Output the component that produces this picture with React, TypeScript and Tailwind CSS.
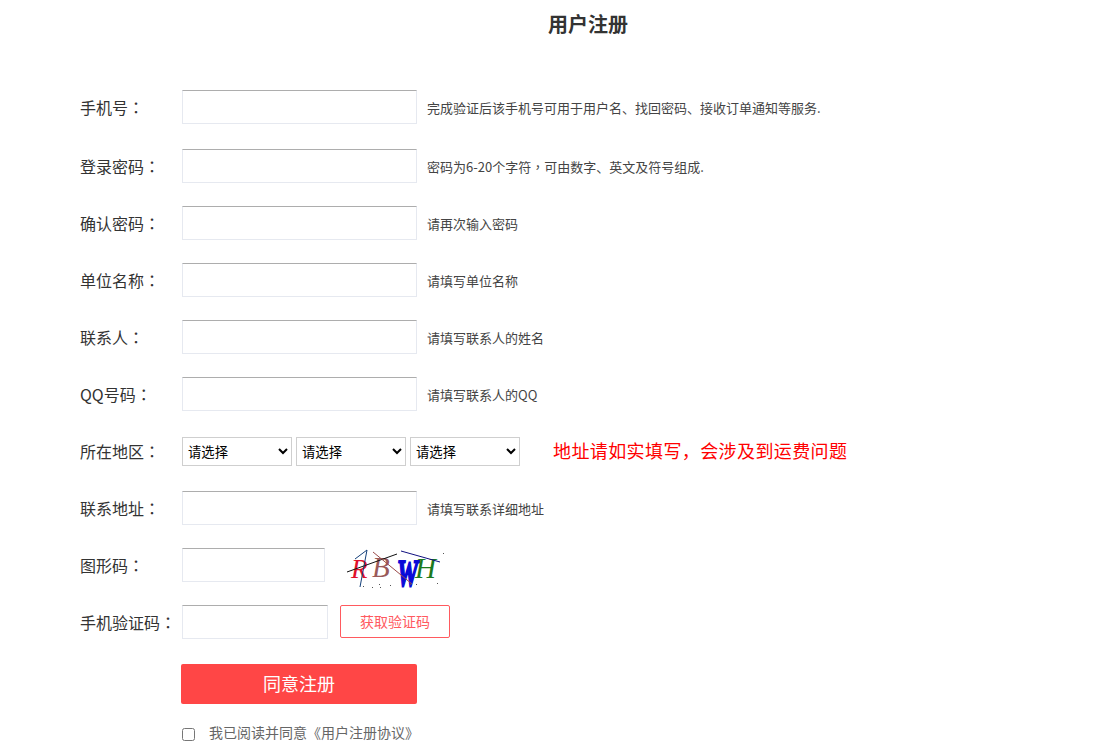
const CJK = "font-['Microsoft_YaHei','Noto_Sans_CJK_SC','Noto_Sans',sans-serif]";

const inputCls =
  "h-[34px] border border-[#e6e9f0] border-t-[#adadad] bg-white outline-none";

// the fullwidth colon and comma sit centred in the reference, as in the TC face
function Mark({ children }: { children: string }) {
  return <span className="font-['Noto_Sans_CJK_TC',sans-serif]">{children}</span>;
}

function Row({ label, className, children }: { label: string; className: string; children: React.ReactNode }) {
  return (
    <div className={`flex h-[34px] items-center ${className}`}>
      <label className="w-[102px] shrink-0 pb-[1px] text-[16px] text-[#333]">
        {label}
        <Mark>：</Mark>
      </label>
      {children}
    </div>
  );
}

function Hint({ children }: { children: React.ReactNode }) {
  return <span className="ml-[10px] pt-[1px] text-[13px] text-[#444]">{children}</span>;
}

function AreaSelect() {
  return (
    <select className="h-[29px] w-[110px] border border-[#cfcfcf] bg-white pl-[1px] text-[13.33px] text-black">
      <option>请选择</option>
    </select>
  );
}

function Captcha() {
  return (
    <svg width="100" height="48" viewBox="0 0 100 48" className="ml-[20px] mt-[14px]">
      <g fontFamily="'Liberation Serif', serif" fontStyle="italic">
        <text x="6" y="30" fill="#e0102a" fontSize="27">R</text>
        <text x="27" y="29" fill="#9a5a5a" fontSize="29">B</text>
        <text
          transform="translate(52,38) scale(0.62,1)"
          fill="#0a0ad8"
          stroke="#0a0ad8"
          strokeWidth="2"
          fontWeight="bold"
          fontSize="38"
        >
          W
        </text>
        <text x="70" y="30" fill="#1d7a1d" fontSize="29">H</text>
      </g>
      <path d="M2 24 L52 6" stroke="#111" strokeWidth="1" fill="none" />
      <path d="M56 3 L95 14" stroke="#101080" strokeWidth="1" fill="none" />
      <path d="M10 11 L22 2 L15 39" stroke="#14407a" strokeWidth="1" fill="none" />
      <path d="M28 4 L67 36" stroke="#9a4a4a" strokeWidth="1" fill="none" />
      <g fill="#555">
        <rect x="18" y="38" width="1" height="1" />
        <rect x="27" y="39" width="1" height="1" />
        <rect x="34" y="36" width="1" height="1" />
        <rect x="35" y="39" width="1" height="1" />
        <rect x="45" y="37" width="1" height="1" />
        <rect x="65" y="36" width="1" height="1" />
        <rect x="71" y="36" width="1" height="1" />
        <rect x="92" y="35" width="1" height="1" />
        <rect x="98" y="5" width="1" height="1" />
      </g>
    </svg>
  );
}

export default function App() {
  return (
    <div className={`h-[748px] w-[1118px] overflow-hidden bg-white ${CJK}`}>
      <h1 className="pl-[58px] pt-[10px] text-center text-[20px] leading-[28px] font-bold text-[#333]">用户注册</h1>
      <form className="pl-[80px] pt-[52px]">
        <Row label="手机号" className="">
          <input className={`${inputCls} w-[235px]`} />
          <Hint>完成验证后该手机号可用于用户名、找回密码、接收订单通知等服务.</Hint>
        </Row>
        <Row label="登录密码" className="mt-[25px]">
          <input className={`${inputCls} w-[235px]`} />
          <Hint>密码为6-20个字符<Mark>，</Mark>可由数字、英文及符号组成.</Hint>
        </Row>
        <Row label="确认密码" className="mt-[23px]">
          <input className={`${inputCls} w-[235px]`} />
          <Hint>请再次输入密码</Hint>
        </Row>
        <Row label="单位名称" className="mt-[23px]">
          <input className={`${inputCls} w-[235px]`} />
          <Hint>请填写单位名称</Hint>
        </Row>
        <Row label="联系人" className="mt-[23px]">
          <input className={`${inputCls} w-[235px]`} />
          <Hint>请填写联系人的姓名</Hint>
        </Row>
        <Row label="QQ号码" className="mt-[23px]">
          <input className={`${inputCls} w-[235px]`} />
          <Hint>请填写联系人的QQ</Hint>
        </Row>
        <Row label="所在地区" className="mt-[23px]">
          <div className="flex gap-[4px] pt-[1px]">
            <AreaSelect />
            <AreaSelect />
            <AreaSelect />
          </div>
          <span className="ml-[33px] pb-[1px] text-[18px] tracking-[0.4px] font-normal text-[#ff0000]">地址请如实填写，会涉及到运费问题</span>
        </Row>
        <Row label="联系地址" className="mt-[23px]">
          <input className={`${inputCls} w-[235px]`} />
          <Hint>请填写联系详细地址</Hint>
        </Row>
        <Row label="图形码" className="mt-[23px]">
          <input className={`${inputCls} w-[143px]`} />
          <Captcha />
        </Row>
        <Row label="手机验证码" className="mt-[23px]">
          <input className={`${inputCls} w-[146px]`} />
          <button type="button" className="ml-[12px] mb-[1px] h-[33px] w-[110px] rounded-[2px] border border-[#ff5a5f] pb-[1px] text-[14px] text-[#ff5a5f]">
            获取验证码
          </button>
        </Row>
        <div className="ml-[101px] mt-[25px]">
          <button type="button" className="h-[40px] w-[236px] rounded-[2px] bg-[#ff4646] pb-[2px] text-[18px] text-white">
            同意注册
          </button>
          <div className="mt-[20px] flex h-[20px] items-center text-[14px] text-[#666]">
            <input type="checkbox" className="ml-[1px] h-[13px] w-[13px]" />
            <span className="ml-[14px] pb-[3px]">我已阅读并同意《用户注册协议》</span>
          </div>
        </div>
      </form>
    </div>
  );
}
